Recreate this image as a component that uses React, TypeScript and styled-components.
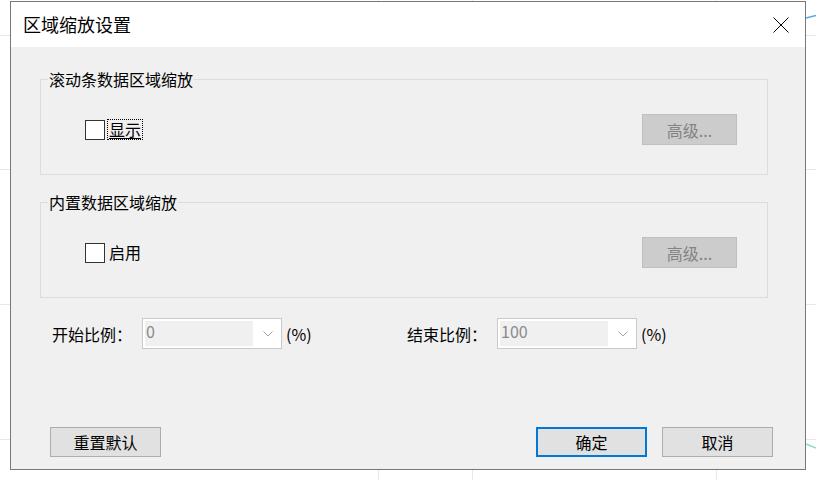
import styled, { createGlobalStyle } from "styled-components";

const GlobalStyle = createGlobalStyle`
    html, body {
        margin: 0;
        padding: 0;
        background: #ffffff;
    }
    body {
        font-family: "Noto Sans CJK SC", "Microsoft YaHei", "Liberation Sans", sans-serif;
    }
`;

const Page = styled.div`
    position: relative;
    width: 816px;
    height: 480px;
    overflow: hidden;
    padding: 1px 0 0 10px;
    box-sizing: border-box;
`;

const Backdrop = styled.svg`
    position: absolute;
    left: 0;
    top: 0;
    width: 816px;
    height: 480px;
`;

const Dialog = styled.div`
    position: relative;
    width: 796px;
    height: 469px;
    box-sizing: border-box;
    border: 1px solid #777777;
    display: flex;
    flex-direction: column;
    background: #f0f0f0;
`;

const TitleBar = styled.div`
    height: 45px;
    flex: none;
    background: #ffffff;
    display: flex;
    align-items: center;
    justify-content: space-between;
    padding: 0 16px 0 12px;
`;

const Title = styled.div`
    font-size: 18px;
    color: #000;
    line-height: 1;
    margin-top: -1px;
`;

const CloseButton = styled.div`
    width: 16px;
    height: 16px;
    display: flex;
`;

const Body = styled.div`
    flex: 1;
    display: flex;
    flex-direction: column;
    padding: 0 32px 12px 29px;
`;

const Group = styled.fieldset<{ $top: number }>`
    margin: ${(p) => p.$top}px 5px 0 0;
    padding: 0;
    border: 1px solid #dcdcdc;
    height: 104px;
    box-sizing: content-box;
    min-width: 0;
`;

const GroupLegend = styled.legend`
    font-size: 16px;
    line-height: 20px;
    padding: 0 1px;
    margin-left: 7px;
    color: #000;
`;

const GroupRow = styled.div`
    display: flex;
    align-items: center;
    justify-content: space-between;
    height: 31px;
    margin-top: 25px;
    padding: 0 30px 0 44px;
`;

const CheckLabel = styled.label`
    display: flex;
    align-items: center;
    gap: 3px;
    font-size: 16px;
    color: #000;
`;

const Box = styled.span`
    width: 18px;
    height: 18px;
    border: 1px solid #333333;
    background: #ffffff;
    display: inline-block;
`;

const LabelText = styled.span<{ $focused?: boolean }>`
    line-height: 19px;
    padding: 0 1px;
    outline: ${(p) => (p.$focused ? "1px dotted #000" : "none")};
    text-decoration: ${(p) => (p.$focused ? "underline" : "none")};
    text-underline-offset: 2px;
`;

const Button = styled.button<{ $primary?: boolean; $disabled?: boolean }>`
    box-sizing: border-box;
    width: ${(p) => (p.$disabled ? 95 : 111)}px;
    height: ${(p) => (p.$disabled ? 31 : 30)}px;
    font-family: inherit;
    font-size: 16px;
    padding: 0;
    background: ${(p) => (p.$disabled ? "#cccccc" : "#e1e1e1")};
    color: ${(p) => (p.$disabled ? "#838383" : "#000")};
    border: ${(p) =>
        p.$primary ? "2px solid #0078d7" : p.$disabled ? "1px solid #bfbfbf" : "1px solid #adadad"};
`;

const RatioRow = styled.div`
    display: flex;
    margin-top: 20px;
    padding-left: 12px;
`;

const RatioField = styled.div`
    width: 355px;
    display: flex;
    align-items: center;
    font-size: 16px;
    color: #000;
`;

const RatioLabel = styled.span`
    width: 90px;
`;

const Combo = styled.div`
    box-sizing: border-box;
    width: 140px;
    height: 31px;
    border: 1px solid #c9c9c9;
    background: #ffffff;
    display: flex;
    align-items: center;
    padding: 2px 8px 2px 2px;
    margin-right: 4px;
`;

const ComboValue = styled.div`
    flex: 0 0 107px;
    align-self: stretch;
    background: #f0f0f0;
    color: #8a8a8a;
    font-size: 16px;
    line-height: 20px;
    padding-left: 1px;
`;

const Chevron = styled.svg`
    margin-left: auto;
    width: 10px;
    height: 6px;
`;

const Spacer = styled.div`
    flex: 1;
`;

const Footer = styled.div`
    display: flex;
    align-items: center;
    padding-left: 10px;
    gap: 15px;
`;

function Checkbox({ label, focused }: { label: string; focused?: boolean }) {
    return (
        <CheckLabel>
            <Box />
            <LabelText $focused={focused}>{label}</LabelText>
        </CheckLabel>
    );
}

function Ratio({ label, value }: { label: string; value: string }) {
    return (
        <RatioField>
            <RatioLabel>{label}</RatioLabel>
            <Combo>
                <ComboValue>{value}</ComboValue>
                <Chevron viewBox="0 0 10 6">
                    <path d="M0.5 0.5 L5 5 L9.5 0.5" fill="none" stroke="#a6a6a6" strokeWidth="1" />
                </Chevron>
            </Combo>
            <span>(%)</span>
        </RatioField>
    );
}

export default function App() {
    return (
        <>
            <GlobalStyle />
            <Page>
                <Backdrop viewBox="0 0 816 480">
                    <g stroke="#e8e8e8" strokeWidth="1">
                        <line x1="378.5" y1="0" x2="378.5" y2="480" />
                        <line x1="472.5" y1="0" x2="472.5" y2="480" />
                        <line x1="716.5" y1="0" x2="716.5" y2="480" />
                        <line x1="0" y1="35.5" x2="816" y2="35.5" />
                        <line x1="0" y1="169.5" x2="816" y2="169.5" />
                        <line x1="0" y1="304.5" x2="816" y2="304.5" />
                        <line x1="0" y1="439.5" x2="816" y2="439.5" />
                    </g>
                    <path d="M806 18 L816 15.5" stroke="#5aa9e6" strokeWidth="1.5" fill="none" />
                    <path d="M806 444 L816 448" stroke="#8adfc0" strokeWidth="1.5" fill="none" />
                </Backdrop>
                <Dialog>
                    <TitleBar>
                        <Title>区域缩放设置</Title>
                        <CloseButton>
                            <svg width="16" height="16" viewBox="0 0 16 16">
                                <path d="M0.5 0.5 L15.5 15.5 M15.5 0.5 L0.5 15.5" stroke="#000" strokeWidth="1" />
                            </svg>
                        </CloseButton>
                    </TitleBar>
                    <Body>
                        <Group $top={22}>
                            <GroupLegend>滚动条数据区域缩放</GroupLegend>
                            <GroupRow>
                                <Checkbox label="显示" focused />
                                <Button $disabled>高级...</Button>
                            </GroupRow>
                        </Group>
                        <Group $top={17}>
                            <GroupLegend>内置数据区域缩放</GroupLegend>
                            <GroupRow>
                                <Checkbox label="启用" />
                                <Button $disabled>高级...</Button>
                            </GroupRow>
                        </Group>
                        <RatioRow>
                            <Ratio label="开始比例：" value="0" />
                            <Ratio label="结束比例：" value="100" />
                        </RatioRow>
                        <Spacer />
                        <Footer>
                            <Button>重置默认</Button>
                            <Spacer />
                            <Button $primary>确定</Button>
                            <Button>取消</Button>
                        </Footer>
                    </Body>
                </Dialog>
            </Page>
        </>
    );
}
